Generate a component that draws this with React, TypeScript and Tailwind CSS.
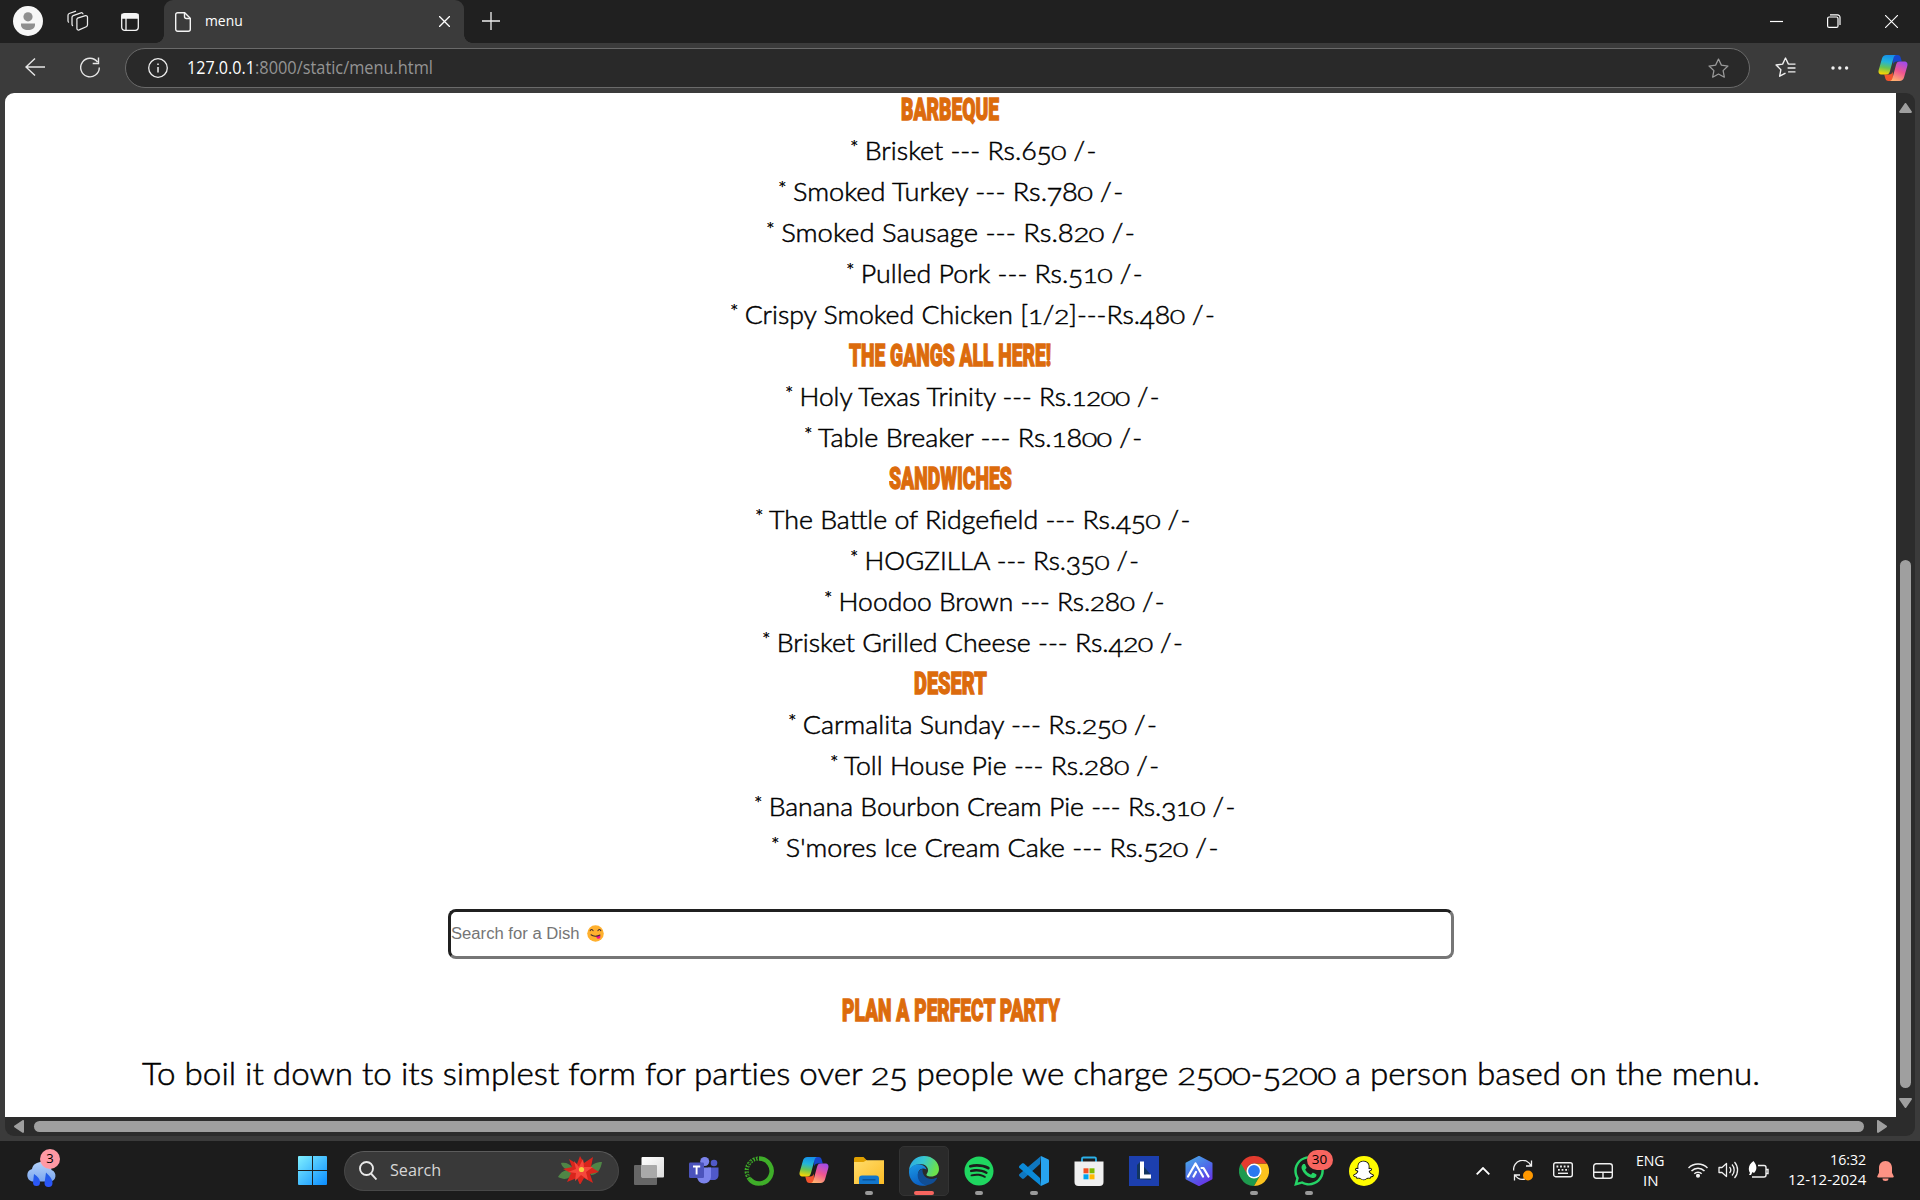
import { useLayoutEffect, useRef, useState, type ReactNode } from "react";
import { FaSnapchatGhost, FaSpotify, FaWhatsapp } from "react-icons/fa";

/* Text stretched horizontally to an exact width. */
function Fit({ w, className = "", children }: { w: number; className?: string; children: ReactNode }) {
  const ref = useRef<HTMLSpanElement>(null);
  const [k, setK] = useState(1);
  useLayoutEffect(() => {
    if (ref.current) setK(w / ref.current.offsetWidth);
  }, [w]);
  return (
    <span className="block shrink-0" style={{ width: w }}>
      <span ref={ref} className={"inline-block origin-left whitespace-pre align-top " + className} style={{ transform: `scaleX(${k})` }}>
        {children}
      </span>
    </span>
  );
}

/* Old-style figures: 0 1 2 at x-height, 3 4 5 7 9 hanging below the baseline. */
function OldStyle({ text }: { text: string }) {
  return (
    <>
      {text.split(/(\d|\*|\/-)/).map((c, i) => {
        if (c === "*") return <span key={i} className="inline-block w-[0.28em] origin-[0%_15%] scale-[0.75]">{c}</span>;
        if (c === "/-") return <span key={i}><span className="tracking-[0.05em]">/</span>-</span>;
        if (/^[012]$/.test(c)) return <span key={i} className="-mx-[0.015em] inline-block origin-[50%_86%] scale-y-[0.76]">{c}</span>;
        if (/^[34579]$/.test(c)) return <span key={i} className="-mx-[0.015em] inline-block translate-y-[0.19em]">{c}</span>;
        return <span key={i}>{c}</span>;
      })}
    </>
  );
}

type Row = { t: string; x: number; w: number; head?: boolean };
const rows: Row[] = [
  { t: "BARBEQUE", x: 901, w: 98, head: true },
  { t: "* Brisket --- Rs.650 /-", x: 850, w: 246 },
  { t: "* Smoked Turkey --- Rs.780 /-", x: 778, w: 345 },
  { t: "* Smoked Sausage --- Rs.820 /-", x: 766, w: 369 },
  { t: "* Pulled Pork --- Rs.510 /-", x: 846, w: 297 },
  { t: "* Crispy Smoked Chicken [1/2]---Rs.480 /-", x: 730, w: 485 },
  { t: "THE GANGS ALL HERE!", x: 849, w: 202, head: true },
  { t: "* Holy Texas Trinity --- Rs.1200 /-", x: 785, w: 375 },
  { t: "* Table Breaker --- Rs.1800 /-", x: 804, w: 338 },
  { t: "SANDWICHES", x: 889, w: 123, head: true },
  { t: "* The Battle of Ridgefield --- Rs.450 /-", x: 755, w: 436 },
  { t: "* HOGZILLA --- Rs.350 /-", x: 850, w: 289 },
  { t: "* Hoodoo Brown --- Rs.280 /-", x: 824, w: 341 },
  { t: "* Brisket Grilled Cheese --- Rs.420 /-", x: 762, w: 421 },
  { t: "DESERT", x: 914, w: 73, head: true },
  { t: "* Carmalita Sunday --- Rs.250 /-", x: 788, w: 369 },
  { t: "* Toll House Pie --- Rs.280 /-", x: 830, w: 329 },
  { t: "* Banana Bourbon Cream Pie --- Rs.310 /-", x: 754, w: 481 },
  { t: "* S'mores Ice Cream Cake --- Rs.520 /-", x: 771, w: 447 },
];

function Heading({ t, w }: { t: string; w: number }) {
  return (
    <Fit w={w} className="font-['Roboto'] text-[32px] leading-[27px] font-black text-[#dc6b0c] [-webkit-text-stroke:1.400px_#dc6b0c]">
      {t}
    </Fit>
  );
}

function Copilot({ id, className }: { id: string; className: string }) {
  return (
    <svg viewBox="0 0 30 28" className={className}>
      <defs>
        <linearGradient id={id + "a"} x1="0.5" y1="0" x2="0.35" y2="1">
          <stop offset="0" stopColor="#1690e8" />
          <stop offset="0.35" stopColor="#22b4dc" />
          <stop offset="0.65" stopColor="#67c455" />
          <stop offset="1" stopColor="#ffd400" />
        </linearGradient>
        <linearGradient id={id + "b"} x1="0.7" y1="0" x2="0.3" y2="1">
          <stop offset="0" stopColor="#a34be8" />
          <stop offset="0.5" stopColor="#f0568f" />
          <stop offset="1" stopColor="#ffb170" />
        </linearGradient>
      </defs>
      <path d="M15 1h4.500c2 0 2.800 1.200 3.300 3l1 3.500h-5c-2 0-3 1-3.600 3z" fill="#1746cc" />
      <path d="M15 27h-4.500c-2 0-2.800-1.200-3.300-3l-1-3.500h5c2 0 3-1 3.600-3z" fill="#f2542d" />
      <path d="M8.500 1H18c-1.500.3-2 1.500-2.500 3L12 17c-.7 2.500-1.500 3.500-4 3.500H4C1 20.500 0 18.500.700 16L4 4.500C4.700 2.200 6 1 8.500 1z" fill={`url(#${id}a)`} />
      <path d="M21.500 27H12c1.500-.3 2-1.500 2.500-3L18 11c.7-2.500 1.500-3.500 4-3.500h4c3 0 4 2 3.300 4.500L26 23.500c-.7 2.300-2 3.500-4.500 3.500z" fill={`url(#${id}b)`} />
    </svg>
  );
}

function TitleBar() {
  return (
    <div className="flex h-[43px] bg-[#202020] text-white">
      <div className="flex w-[164px] shrink-0 items-center">
        <svg viewBox="0 0 30 30" className="ml-[13px] mb-[1px] size-[30px]">
          <circle cx="15" cy="15" r="15" fill="#f7f7f7" />
          <circle cx="15" cy="10.800" r="4.600" fill="#8f8f8f" />
          <path d="M8 17.500h14v1.500c0 3-3 5-7 5s-7-2-7-5z" fill="#8f8f8f" />
        </svg>
        <svg viewBox="0 0 22 22" className="ml-[24px] mb-[1px] size-[22px]" fill="none" stroke="#ececec" strokeWidth="1.250">
          <path d="M10.500 8.200l8-2.500a1.600 1.600 0 0 1 2 1.600v7.500a2 2 0 0 1-1.200 1.900l-7.200 3.200a1.600 1.600 0 0 1-2.200-1.500v-8a2 2 0 0 1 .600-2.200z" />
          <path d="M6 15.800a1.600 1.600 0 0 1-1-1.600V7.500a2 2 0 0 1 1.200-1.900L14 2.800a1.600 1.600 0 0 1 2 1.400M2 12.500a1.600 1.600 0 0 1-1-1.600V5.400a2 2 0 0 1 1.200-1.900L9 1.200" />
        </svg>
        <svg viewBox="0 0 18 18" className="ml-[32px] size-[18px]" fill="none" stroke="#f4f4f4" strokeWidth="1.300">
          <rect x="0.700" y="0.700" width="16.600" height="16.600" rx="3" />
          <path d="M1 1.500h16V5H1z" fill="#f4f4f4" />
          <path d="M5 5v12.500" />
        </svg>
      </div>
      <div className="relative flex w-[300px] shrink-0 items-center rounded-t-[9px] bg-[#3b3b3b]">
        <span className="absolute -left-2 bottom-0 size-2 bg-[radial-gradient(circle_at_0_0,#202020_7.500px,#3b3b3b_8px)]" />
        <span className="absolute -right-2 bottom-0 size-2 bg-[radial-gradient(circle_at_100%_0,#202020_7.500px,#3b3b3b_8px)]" />
        <svg viewBox="0 0 16 20" className="ml-[11px] mt-[1px] h-[20px] w-[16px]" fill="none" stroke="#f4f4f4" strokeWidth="1.400">
          <path d="M2.700.700h7L15.300 6.300v11a2 2 0 0 1-2 2H2.700a2 2 0 0 1-2-2v-14.600a2 2 0 0 1 2-2z" />
          <path d="M9.500 1v3.500a2 2 0 0 0 2 2H15" />
        </svg>
        <div className="ml-[14px] mt-[1px]">
          <Fit w={38} className="font-['Open_Sans'] text-[15px] leading-5">menu</Fit>
        </div>
        <svg viewBox="0 0 10 10" className="ml-[196px] size-[11px]" stroke="#fff" strokeWidth="1.200">
          <path d="M0 0l10 10M10 0L0 10" />
        </svg>
      </div>
      <svg viewBox="0 0 18 18" className="ml-[18px] mt-[12px] size-[18px]" stroke="#eee" strokeWidth="1.300">
        <path d="M9 0v18M0 9h18" />
      </svg>
      <div className="ml-auto mt-[14px] flex text-white">
        <svg viewBox="0 0 14 14" className="mr-[43px] size-[14px]" stroke="#fff" strokeWidth="1.200"><path d="M0 7.500h13" /></svg>
        <svg viewBox="0 0 14 14" className="mr-[44px] size-[14px]" fill="none" stroke="#fff" strokeWidth="1.200">
          <rect x="0.600" y="3" width="10.400" height="10.400" rx="1.500" />
          <path d="M3 .900h7.500a2.500 2.500 0 0 1 2.500 2.500V11" />
        </svg>
        <svg viewBox="0 0 14 14" className="mr-[22px] mt-[1px] size-[13px]" stroke="#fff" strokeWidth="1.200"><path d="M0 0l14 14M14 0L0 14" /></svg>
      </div>
    </div>
  );
}

const star = "M10 1l2.750 5.800 6.250.850-4.600 4.400 1.150 6.250L10 15.300 4.450 18.300 5.600 12.050 1 7.650l6.250-.850z";

function Toolbar() {
  return (
    <div className="flex h-[50px] items-start bg-[#3b3b3b]">
      <svg viewBox="0 0 20 18" className="ml-[25px] mt-[15px] h-[18px] w-[20px]" fill="none" stroke="#e6e6e6" strokeWidth="1.400"><path d="M20 9H1M10 .500L1 9l9 8.500" /></svg>
      <svg viewBox="0 0 20 21" className="ml-[35px] mt-[14px] h-[21px] w-[20px]" fill="none" stroke="#e6e6e6" strokeWidth="1.400">
        <path d="M19.300 10.500A9.300 9.300 0 1 1 17.500 5M18.500.500v6H12.700" />
      </svg>
      <div className="ml-[25px] mt-[5px] flex h-[40px] w-[1625px] items-center rounded-full border border-[#6a6a6a] bg-[#292929]">
        <svg viewBox="0 0 20 20" className="ml-[22px] size-[20px]" fill="none" stroke="#eee" strokeWidth="1.300">
          <circle cx="10" cy="10" r="9.300" />
          <path d="M10 9v5.500M10 5.500v1.600" strokeWidth="1.500" />
        </svg>
        <div className="mb-[2px] ml-[19px] flex font-['Open_Sans'] text-[18px] leading-6">
          <Fit w={68} className="text-white">127.0.0.1</Fit>
          <Fit w={178} className="text-[#949494]">:8000/static/menu.html</Fit>
        </div>
        <svg viewBox="0 0 20 20" className="ml-auto mr-[20px] size-[21px]" fill="none" stroke="#9a9a9a" strokeWidth="1.200" strokeLinejoin="round"><path d={star} /></svg>
      </div>
      <svg viewBox="0 0 20 20" className="ml-[25px] mt-[14px] size-[21px] overflow-visible" fill="none" stroke="#f0f0f0" strokeWidth="1.300" strokeLinejoin="round">
        <path d="M12.750 6.800L10 1 7.250 6.800 1 7.650l4.600 4.400-1.150 6.250L10 15.300" />
        <path d="M12.500 6.800h7M12 10.500h7.500M12.500 14.200h7" />
      </svg>
      <svg viewBox="0 0 18 4" className="ml-[35px] mt-[23px] h-[4px] w-[18px]" fill="#f0f0f0">
        <circle cx="2" cy="2" r="1.700" /><circle cx="8.800" cy="2" r="1.700" /><circle cx="15.600" cy="2" r="1.700" />
      </svg>
      <Copilot id="tb" className="ml-[29px] mt-[11px] h-[28px] w-[30px]" />
    </div>
  );
}

function Page() {
  return (
    <div className="h-[1024px] w-[1891px] shrink-0 rounded-tl-[9px] bg-white text-black">
      <div className="-mt-[4px]">
        {rows.map((r) => (
          <div key={r.t} className="flex h-[41px] items-end" style={{ paddingLeft: r.x - 5 }}>
            {r.head ? (
              <div className="mb-[7px] h-[27px]"><Heading t={r.t} w={r.w} /></div>
            ) : (
              <div className="mb-[8px] h-[26px]">
                <Fit w={r.w} className="font-['Lato'] text-[25.600px] leading-[26px] font-light [-webkit-text-stroke:0.500px_black]"><OldStyle text={r.t} /></Fit>
              </div>
            )}
          </div>
        ))}
      </div>
      <div className="ml-[443px] mt-[41px] flex h-[50px] w-[1006px] items-center rounded-[8px] border-[3px] border-t-[#202020] border-l-[#202020] border-r-[#767676] border-b-[#767676]">
        <div className="mt-[3px]">
          <Fit w={129} className="font-['Liberation_Sans'] text-[16px] leading-[20px] text-[#757575]">Search for a Dish</Fit>
        </div>
        <svg viewBox="0 0 16 16" className="mb-[1px] ml-[7px] size-[17px]">
          <circle cx="8" cy="8" r="7.800" fill="#ffb02e" />
          <path d="M3 5.300c.5-1.500 2.200-1.500 2.700 0M10.300 5.300c.5-1.500 2.200-1.500 2.700 0" fill="none" stroke="#402a32" strokeWidth="1" strokeLinecap="round" />
          <path d="M8.500 10.800l3.700-1.300c.8 1.500.5 3-.7 3.400-1.300.400-2.500-.5-3-2.100z" fill="#f70a8d" />
          <path d="M3.800 9.200c2 1.700 5.800 1.700 8.400.2" fill="none" stroke="#402a32" strokeWidth="1" strokeLinecap="round" />
        </svg>
      </div>
      <div className="ml-[837px] mt-[38px] h-[29px]"><Heading t="PLAN A PERFECT PARTY" w={218} /></div>
      <div className="ml-[137px] mt-[32px] h-[31px]">
        <Fit w={1618} className="font-['Lato'] text-[31px] leading-[31px] font-light [-webkit-text-stroke:0.500px_black] [font-variant-ligatures:none]">
          <OldStyle text="To boil it down to its simplest form for parties over 25 people we charge 2500-5200 a person based on the menu." />
        </Fit>
      </div>
    </div>
  );
}

function Slot({ children, dot, active }: { children: ReactNode; dot?: boolean; active?: boolean }) {
  return (
    <div className="flex w-[55px] shrink-0 justify-center">
      <div className={"relative flex h-[50px] w-[50px] items-center justify-center rounded-[5px] " + (active ? "border border-[#333] bg-[#2a2a2a]" : "")}>
        {children}
        {active && <span className="absolute bottom-0 left-[14px] h-[4px] w-[20px] rounded-full bg-[#f7655f]" />}
        {dot && <span className="absolute bottom-[1px] left-[21px] h-[4px] w-[8px] rounded-full bg-[#9a9a9a]" />}
      </div>
    </div>
  );
}

function Taskbar() {
  return (
    <div className="flex h-[59px] items-center bg-[#1c1c1c] text-white">
      <div className="relative mb-[2px] ml-[25px] h-[42px] w-[36px] shrink-0">
        <svg viewBox="0 0 36 42" className="size-full">
          <defs>
            <linearGradient id="cl" x1="0" y1="0" x2="0" y2="1"><stop offset="0" stopColor="#b3d2fb" /><stop offset="1" stopColor="#7ba6ee" /></linearGradient>
            <linearGradient id="dr" x1="0" y1="0" x2="0" y2="1"><stop offset="0" stopColor="#1d5de0" /><stop offset="1" stopColor="#2f55ff" /></linearGradient>
          </defs>
          <path d="M7 32.500a6.500 6.500 0 0 1 0-12.500C8 15 12 13 17 13c6 0 9 4 9.500 8 6 2 5 11.500-1.500 11.500z" fill="url(#cl)" />
          <path d="M9 25c4 3 6 5 6 8.500a3.500 3.500 0 0 1-7 0zM21 23.500c4 4 6.500 6.500 6.500 10.500a4 4 0 0 1-8 0z" fill="url(#dr)" />
        </svg>
        <span className="absolute top-0 left-[15px] flex size-[20px] items-center justify-center rounded-full bg-[#ff99a4] font-['Open_Sans'] text-[13px] leading-none text-black">3</span>
      </div>
      <svg viewBox="0 0 30 30" className="ml-[237px] size-[29px] shrink-0">
        <defs><linearGradient id="win" gradientUnits="userSpaceOnUse" x1="0" y1="0" x2="30" y2="30"><stop offset="0" stopColor="#80f0ff" /><stop offset="1" stopColor="#0a8cff" /></linearGradient></defs>
        <path d="M1 0h13.500v14.500H0V1a1 1 0 0 1 1-1zM15.500 0H29a1 1 0 0 1 1 1v13.500H15.500zM0 15.500h14.500V30H1a1 1 0 0 1-1-1zM15.500 15.500H30V29a1 1 0 0 1-1 1H15.500z" fill="url(#win)" />
      </svg>
      <div className="ml-[17px] flex h-[40px] w-[275px] shrink-0 items-center rounded-full border border-[#484848] border-t-[#5c5c5c] bg-[#393939]">
        <svg viewBox="0 0 18 19" className="ml-[14px] h-[19px] w-[18px]" fill="none" stroke="#e8e8e8" strokeWidth="1.900"><circle cx="7.500" cy="7.500" r="6.500" /><path d="M12 12.500l5.500 6" /></svg>
        <div className="ml-[13px] mt-[2px]"><Fit w={51} className="font-['Open_Sans'] text-[16.500px] leading-5 text-[#d6d6d6]">Search</Fit></div>
        <svg viewBox="0 0 44 28" className="ml-[117px] mb-[1px] h-[28px] w-[44px]">
          <path d="M0 21C3 15 10 12 16 14l-4 7C8 24 4 23 0 21zM44 6c-6 0-10 2-14 8l3 5c6 0 10-6 11-13zM3 7c5-1 9 1 12 5l-4 2C7 13 4 11 3 7z" fill="#4f8546" />
          <path d="M11 3l8 5 3-8 4 7 9-6-2 10 8 5-9 2 3 9-9-5-4 7-3-7-10 4 4-9-8-4 9-2z" fill="#d8251c" />
          <path d="M16 5l5 6 4-8 1 8 9 0-7 5 2 8-7-5-6 6 1-8-8-1 8-3z" fill="#f6473b" />
          <circle cx="23.500" cy="13.500" r="2.600" fill="#f3cf3f" />
        </svg>
      </div>
      <div className="ml-[2px] flex">
        <Slot>
          <svg viewBox="0 0 30 28" className="h-[28px] w-[30px]">
            <defs><linearGradient id="tv" x1="0" y1="0" x2="1" y2="1"><stop offset="0" stopColor="#fff" /><stop offset="1" stopColor="#dcdcdc" /></linearGradient></defs>
            <rect x="0" y="8" width="23" height="20" rx="1" fill="#666" />
            <rect x="7.500" y="0" width="22.500" height="20.500" rx="1" fill="url(#tv)" />
            <path d="M7.500 8H22a1 1 0 0 1 1 1v11.500H7.500z" fill="#a9a9a9" />
          </svg>
        </Slot>
        <Slot>
          <svg viewBox="0 0 30 27" className="h-[27px] w-[30px]">
            <circle cx="15.700" cy="4.500" r="4.500" fill="#7b83eb" /><circle cx="25" cy="6" r="3.300" fill="#5059c9" />
            <path d="M19 10.500h10.500V18c0 3-2 5-5 5h-5z" fill="#5059c9" />
            <path d="M8 10.500h14V19c0 4.500-3 7.500-7 7.500S8 23.500 8 19z" fill="#7b83eb" />
            <rect x="0" y="5.500" width="15" height="15.500" rx="1.300" fill="#4b53bc" />
            <path d="M4 9.500h7.200M7.600 9.500v8" stroke="#fff" strokeWidth="1.900" />
          </svg>
        </Slot>
        <Slot>
          <svg viewBox="0 0 30 30" className="size-[30px]" fill="none" stroke="#3fae29">
            <path d="M15 2.500a12.500 12.500 0 1 1-9.500 20.500" strokeWidth="4.500" />
            <path d="M5.500 23A12.500 12.500 0 0 1 15 2.500" strokeWidth="4" strokeDasharray="2 1.100" />
            <path d="M4 20A12.500 12.500 0 0 1 14 2.500" strokeWidth="2" stroke="#1c1c1c" strokeDasharray="1 1.500" />
          </svg>
        </Slot>
        <Slot><Copilot id="tk" className="mb-[2px] h-[28px] w-[30px]" /></Slot>
        <Slot dot>
          <svg viewBox="0 0 30 27" className="h-[27px] w-[30px]">
            <defs><linearGradient id="fo" x1="0" y1="0" x2="1" y2="1"><stop offset="0" stopColor="#ffdc6b" /><stop offset="1" stopColor="#fcbc25" /></linearGradient></defs>
            <path d="M0 1.500A1.500 1.500 0 0 1 1.500 0h8l3.500 3.500V8H0z" fill="#e0a000" />
            <path d="M0 5h9.500l3-1.800H30V27H0z" fill="url(#fo)" />
            <path d="M5 27v-5.500a3 3 0 0 1 3-3h14a3 3 0 0 1 3 3V27z" fill="#1276cc" />
            <path d="M8.500 22.800h13" stroke="#0a4f93" strokeWidth="1.300" />
          </svg>
        </Slot>
        <Slot active>
          <svg viewBox="0 0 30 30" className="size-[30px]">
            <defs>
              <linearGradient id="e1" x1="0" y1="0" x2="1" y2="0.300"><stop offset="0" stopColor="#2aa5e8" /><stop offset="0.500" stopColor="#37c6d0" /><stop offset="1" stopColor="#6be24c" /></linearGradient>
              <linearGradient id="e2" x1="0" y1="0" x2="0.300" y2="1"><stop offset="0" stopColor="#1b9ae6" /><stop offset="1" stopColor="#0c62c4" /></linearGradient>
            </defs>
            <path d="M0 14.500C.5 6 7 0 15 0c9 0 15 6.500 15 13 0 5-3.500 7.500-8 7.500-3.500 0-5.500-1.300-4-3 1.500-2 1.500-5-.5-7C13 6 4 8 0 14.500z" fill="url(#e1)" />
            <path d="M0 14.500C2 9.500 7 7.500 11.500 8.500c3 .7 5.500 2.500 6 5-5-3-9 1-8.500 6 .5 5 4.500 9 9.500 9.500C8 32.500-.8 25 0 14.500z" fill="url(#e2)" />
            <path d="M13.500 12.700c-4 1.500-5.500 5-4.500 9 1 4.500 5 7.500 9.500 7.300 4-.5 7.500-3 9.500-6.500.3-.6-.2-1-.8-.7-7 3.500-14.500-1-13.700-9.100z" fill="#104e96" />
          </svg>
        </Slot>
        <Slot dot><span className="flex size-[30px] items-center justify-center"><FaSpotify className="size-[30px] text-[#1fd660]" /></span></Slot>
        <Slot dot>
          <svg viewBox="0 0 30 30" className="size-[30px]">
            <path d="M22 0l-1 8L5 22.500c-.7.500-1.500.5-2 0l-2.500-2.300c-.7-.7-.7-1.600 0-2.200z" fill="#0f77c0" />
            <path d="M22 30l-1-8L5 7.500c-.7-.5-1.500-.5-2 0L.5 9.800c-.7.700-.7 1.600 0 2.200z" fill="#0b8ad8" />
            <path d="M22 0l7 3.200c.7.300 1 .800 1 1.500v20.600c0 .7-.3 1.200-1 1.500L22 30z" fill="#27a3ef" />
          </svg>
        </Slot>
        <Slot>
          <svg viewBox="0 0 30 30" className="size-[30px]">
            <path d="M8 6V2.800A1.300 1.300 0 0 1 9.300 1.500h11.400A1.300 1.300 0 0 1 22 2.800V6" fill="none" stroke="#2bb0e8" strokeWidth="1.800" />
            <path d="M.5 5.500h29V26a4 4 0 0 1-4 4h-21a4 4 0 0 1-4-4z" fill="#f0f0f0" />
            <path d="M9.500 12.300h5v5h-5z" fill="#f25022" /><path d="M15.500 12.300h5v5h-5z" fill="#7fba00" /><path d="M9.500 18.300h5v5h-5z" fill="#00a4ef" /><path d="M15.500 18.300h5v5h-5z" fill="#ffb900" />
          </svg>
        </Slot>
        <Slot>
          <svg viewBox="0 0 30 30" className="size-[30px]">
            <path d="M0 0h30v30H0z" fill="#1c3fae" />
            <path d="M11 6L8 9v14l14 1V19z" fill="#12365f" />
            <path d="M13 5.500v15h9" fill="none" stroke="#fff" strokeWidth="4" />
          </svg>
        </Slot>
        <Slot>
          <svg viewBox="0 0 30 30" className="size-[30px]">
            <defs><linearGradient id="ai" x1="0.200" y1="0" x2="0.800" y2="1"><stop offset="0" stopColor="#4aa3e8" /><stop offset="0.500" stopColor="#4d6be8" /><stop offset="1" stopColor="#6a2fe6" /></linearGradient></defs>
            <path d="M15 1l12.500 6.500v15L15 29 2.500 22.500v-15z" fill="url(#ai)" stroke="url(#ai)" strokeWidth="2" strokeLinejoin="round" />
            <path d="M4 20.500L11.500 7.500l7.500 13M9.500 20.500l2.500-4.500M17.500 12h2l5 8.500" fill="none" stroke="#fff" strokeWidth="2.200" strokeLinejoin="round" strokeLinecap="round" />
          </svg>
        </Slot>
        <Slot dot>
          <svg viewBox="0 0 30 30" className="size-[30px]">
            <path d="M15 15L2 7.500A15 15 0 0 0 15 30l6.500-11.200z" fill="#1e9a4e" />
            <path d="M15 7.500h13A15 15 0 0 1 15 30l6.500-11.200z" fill="#fcc31e" />
            <path d="M15 7.500h13A15 15 0 0 0 2 7.500l6.500 11.300A7.500 7.500 0 0 1 15 7.500z" fill="#e33b2e" />
            <circle cx="15" cy="15" r="7.500" fill="#fff" /><circle cx="15" cy="15" r="5.900" fill="#2a78f0" />
          </svg>
        </Slot>
        <Slot dot>
          <FaWhatsapp className="size-[34px] text-[#25d366]" />
          <span className="absolute top-[4px] left-[23px] flex h-[20px] w-[26px] items-center justify-center rounded-full bg-[#f7655f] font-['Open_Sans'] text-[13.500px] leading-none text-black">30</span>
        </Slot>
        <Slot>
          <span className="flex size-[30px] items-center justify-center rounded-full bg-[#fffc00]">
            <FaSnapchatGhost className="size-[19px] overflow-visible text-white [stroke-width:45px] [stroke:black] [paint-order:stroke]" />
          </span>
        </Slot>
      </div>
      <div className="ml-auto flex h-full shrink-0 items-center">
        <svg viewBox="0 0 14 8" className="mr-[23px] h-[8px] w-[14px]" fill="none" stroke="#fff" strokeWidth="1.800"><path d="M.7 7.300L7 1l6.300 6.300" /></svg>
        <svg viewBox="0 0 20 21" className="mr-[20px] h-[21px] w-[20px]" fill="none" stroke="#f0f0f0" strokeWidth="1.300">
          <path d="M.7 10.500A9 9 0 0 1 18 6M18.500.500V6H13M12 19A9 9 0 0 1 2 15M1.500 20.500V15H7" />
          <circle cx="15" cy="15.500" r="5" fill="#ff9800" stroke="none" />
        </svg>
        <svg viewBox="0 0 20 16" className="mr-[20px] mb-[1px] h-[16px] w-[20px]" fill="none" stroke="#f0f0f0" strokeWidth="1.400">
          <rect x="0.700" y="0.700" width="18.600" height="14" rx="2" />
          <path d="M3.500 4.500h13M5 7.800h11" strokeDasharray="1.800 1.800" strokeWidth="1.800" /><path d="M5 11.300h10" />
        </svg>
        <svg viewBox="0 0 20 16" className="mr-[23px] h-[16px] w-[20px]" fill="none" stroke="#f0f0f0" strokeWidth="1.400">
          <rect x="0.700" y="0.700" width="18.600" height="14.600" rx="2.500" /><path d="M1 9.300h18M10 9.300v6" />
        </svg>
        <div className="mr-[23px] mb-[1px] flex flex-col items-center font-['Open_Sans'] text-[15px] leading-[20px]">
          <Fit w={29}>ENG</Fit><Fit w={15}>IN</Fit>
        </div>
        <svg viewBox="0 0 20 16" className="mr-[10px] mb-[1px] h-[16px] w-[20px]" fill="none" stroke="#f0f0f0" strokeWidth="1.500">
          <path d="M.5 6a13.500 13.500 0 0 1 19 0M3.500 9a9 9 0 0 1 13 0M6.300 11.800a5.200 5.200 0 0 1 7.400 0" /><circle cx="10" cy="13.800" r="1.300" fill="#fff" />
        </svg>
        <svg viewBox="0 0 21 18" className="mr-[9px] mb-[1px] h-[18px] w-[21px]" fill="none" stroke="#f0f0f0" strokeWidth="1.300" strokeLinejoin="round">
          <path d="M1 6.500h3L8.500 2.500v13L4 11.500H1zM11.500 6a4.500 4.500 0 0 1 0 6M14 3.500a8 8 0 0 1 0 11M16.500 1a12 12 0 0 1 0 16" />
        </svg>
        <svg viewBox="0 0 21 18" className="mr-[19px] mb-[2px] h-[18px] w-[21px]" fill="none" stroke="#f0f0f0" strokeWidth="1.400">
          <path d="M10 4.500h6a2 2 0 0 1 2 2V14a2 2 0 0 1-2 2H4M18.500 8.500h1.500v4h-1.500" />
          <path d="M5.500 0C9 4 9.500 9 6 12l-1.500-1-1.500 3H1l1-2C-.5 8 1 3 5.500 0z" fill="#fff" stroke="none" />
        </svg>
        <div className="mb-[3px] flex flex-col items-end font-['Open_Sans'] text-[15px] leading-[20px]">
          <Fit w={36}>16:32</Fit><Fit w={78}>12-12-2024</Fit>
        </div>
        <svg viewBox="0 0 17 20" className="mr-[26px] ml-[11px] h-[20px] w-[17px]" fill="#fc9384">
          <path d="M8.500 0C4.500 0 2 3 2 6.800v5L.3 15.300c-.2.700.1 1.200.7 1.200h15c.6 0 .9-.5.700-1.200L15 11.800v-5C15 3 12.500 0 8.500 0zM5.500 17.500h6a3 2.500 0 0 1-6 0z" />
        </svg>
      </div>
    </div>
  );
}

export default function App() {
  return (
    <div className="flex h-[1200px] w-[1920px] flex-col bg-[#3b3b3b]">
      <TitleBar />
      <Toolbar />
      <div className="mr-[5px] ml-[5px] flex h-[1043px] flex-col rounded-[9px] bg-[#2c2c2c]">
        <div className="flex">
          <Page />
          <div className="flex h-[1024px] w-[19px] flex-col items-center pr-[1px]">
            <svg viewBox="0 0 13 10" className="mt-[10px] h-[10px] w-[13px]" fill="#9f9f9f"><path d="M5.500.7a1.200 1.200 0 0 1 2 0L12.800 8.500c.3.800 0 1.500-1 1.500H1.200c-1 0-1.300-.7-1-1.500z" /></svg>
            <div className="mt-[447px] h-[528px] w-[11px] rounded-full bg-[#9f9f9f]" />
            <svg viewBox="0 0 13 10" className="mt-[10px] h-[10px] w-[13px]" fill="#9f9f9f"><path d="M5.500 9.300a1.200 1.200 0 0 0 2 0L12.800 1.500c.3-.8 0-1.500-1-1.500H1.200C.2 0-.1.700.2 1.500z" /></svg>
          </div>
        </div>
        <div className="flex h-[19px] items-center">
          <svg viewBox="0 0 10 13" className="ml-[9px] h-[13px] w-[10px]" fill="#9f9f9f"><path d="M.7 5.500a1.200 1.200 0 0 0 0 2L8.500 12.800c.8.300 1.500 0 1.500-1V1.200c0-1-.7-1.300-1.500-1z" /></svg>
          <div className="ml-[10px] h-[11px] w-[1830px] rounded-full bg-[#9f9f9f]" />
          <svg viewBox="0 0 10 13" className="ml-[13px] h-[13px] w-[10px]" fill="#9f9f9f"><path d="M9.300 5.500a1.200 1.200 0 0 1 0 2L1.500 12.800c-.8.300-1.500 0-1.500-1V1.200c0-1 .7-1.300 1.500-1z" /></svg>
        </div>
      </div>
      <div className="h-[5px]" />
      <Taskbar />
    </div>
  );
}
